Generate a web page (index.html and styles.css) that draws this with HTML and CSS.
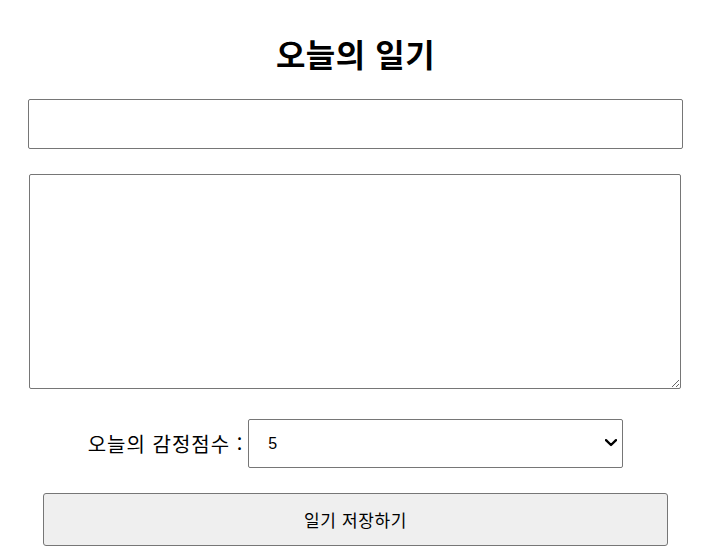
FILE: index.html
```html
<!DOCTYPE html>
<html lang="ko">
<head>
<meta charset="utf-8">
<title>오늘의 일기</title>
<link rel="stylesheet" href="styles.css">
</head>
<body>
<div class="editor">
  <h2 class="title">오늘의 일기</h2>
  <input class="author" type="text">
  <textarea class="content"></textarea>
  <div class="emotion-row">
    <span class="emotion-label">오늘의 감정점수 :</span>
    <span class="select-wrap">
      <select class="emotion-select">
        <option>1</option>
        <option>2</option>
        <option>3</option>
        <option>4</option>
        <option selected>5</option>
      </select>
      <svg class="chevron" width="12" height="8" viewBox="0 0 12 8"><path d="M1 1.2 L6 6 L11 1.2" fill="none" stroke="#000" stroke-width="2.4" stroke-linecap="round" stroke-linejoin="round"/></svg>
    </span>
  </div>
  <button class="save-btn">일기 저장하기</button>
</div>
</body>
</html>
```
FILE: styles.css
```css
html, body {
  margin: 0;
  padding: 0;
  background: #fff;
}
body {
  font-family: "Noto Sans CJK KR", "Noto Sans", sans-serif;
  color: #000;
}
.editor {
  width: 655px;
  margin-left: 28px;
  display: flex;
  flex-direction: column;
  align-items: center;
}
.title {
  margin: 0;
  padding-top: 31px;
  height: 99px;
  box-sizing: border-box;
  font-size: 32px;
  font-weight: 700;
  line-height: 44px;
  letter-spacing: 0.5px;
  text-align: center;
}
.author {
  width: 655px;
  height: 50px;
  box-sizing: border-box;
  border: 1px solid #767676;
  border-radius: 2px;
  margin: 0;
  padding: 0 10px;
  font-size: 16px;
}
.content {
  align-self: flex-start;
  width: 652px;
  height: 215px;
  box-sizing: border-box;
  border: 1px solid #767676;
  border-radius: 2px;
  margin: 25px 0 0 1px;
  padding: 10px;
  font-size: 16px;
  display: block;
}
.emotion-row {
  margin-top: 30px;
  display: flex;
  align-items: center;
  gap: 5px;
  height: 49px;
}
.emotion-label {
  font-size: 20px;
  letter-spacing: 1px;
}
.select-wrap {
  position: relative;
  display: block;
  width: 375px;
  height: 49px;
}
.emotion-select {
  appearance: none;
  -webkit-appearance: none;
  width: 375px;
  height: 49px;
  box-sizing: border-box;
  border: 1px solid #767676;
  border-radius: 2px;
  padding: 0 10px 0 19px;
  font-family: "Liberation Sans", sans-serif;
  font-size: 16px;
  background: #fff;
  color: #000;
}
.chevron {
  position: absolute;
  right: 6px;
  top: 20px;
  pointer-events: none;
}
.save-btn {
  margin-top: 25px;
  width: 625px;
  height: 53px;
  box-sizing: border-box;
  border: 1px solid #767676;
  border-radius: 3px;
  background: #efefef;
  font-family: "Noto Sans CJK KR", sans-serif;
  font-size: 17px;
  letter-spacing: 0.6px;
  color: #000;
}
```
